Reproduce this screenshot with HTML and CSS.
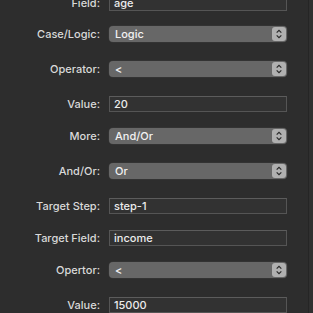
FILE: index.html
```html
<!DOCTYPE html>
<html>
<head>
  <title>Rule Editor</title>
  <meta charset="UTF-8">
  <meta name="viewport" content="width=device-width, initial-scale=1.0">
  <link rel="stylesheet" href="styles.css">
</head>
<body>
  <div class="window">
    <form class="form">
      <div class="row row-input row-first">
        <label>Field:</label>
        <div class="text-field">age</div>
      </div>
      <div class="row row-select">
        <label>Case/Logic:</label>
        <div class="popup"><span>Logic</span><i class="stepper"><svg viewBox="0 0 14 15"><path d="M4.5 6 L7 3.5 L9.5 6 M4.5 9 L7 11.5 L9.5 9"/></svg></i></div>
      </div>
      <div class="row row-select">
        <label>Operator:</label>
        <div class="popup"><span>&lt;</span><i class="stepper"><svg viewBox="0 0 14 15"><path d="M4.5 6 L7 3.5 L9.5 6 M4.5 9 L7 11.5 L9.5 9"/></svg></i></div>
      </div>
      <div class="row row-input">
        <label>Value:</label>
        <div class="text-field">20</div>
      </div>
      <div class="row row-select">
        <label>More:</label>
        <div class="popup"><span>And/Or</span><i class="stepper"><svg viewBox="0 0 14 15"><path d="M4.5 6 L7 3.5 L9.5 6 M4.5 9 L7 11.5 L9.5 9"/></svg></i></div>
      </div>
      <div class="row row-select">
        <label>And/Or:</label>
        <div class="popup"><span>Or</span><i class="stepper"><svg viewBox="0 0 14 15"><path d="M4.5 6 L7 3.5 L9.5 6 M4.5 9 L7 11.5 L9.5 9"/></svg></i></div>
      </div>
      <div class="row row-input">
        <label>Target Step:</label>
        <div class="text-field">step-1</div>
      </div>
      <div class="row row-input">
        <label>Target Field:</label>
        <div class="text-field">income</div>
      </div>
      <div class="row row-select">
        <label>Opertor:</label>
        <div class="popup"><span>&lt;</span><i class="stepper"><svg viewBox="0 0 14 15"><path d="M4.5 6 L7 3.5 L9.5 6 M4.5 9 L7 11.5 L9.5 9"/></svg></i></div>
      </div>
      <div class="row row-input">
        <label>Value:</label>
        <div class="text-field">15000</div>
      </div>
    </form>
    <div class="track"></div>
  </div>
</body>
</html>
```

FILE: styles.css
```css
html, body {
  margin: 0;
  height: 100%;
  background-color: #2d2d2d;
  overflow: hidden;
}
body {
  font-family: "Inter", "Liberation Sans", sans-serif;
  font-size: 11px;
  font-weight: 500;
  color: #dedede;
}
.window {
  display: flex;
  height: 100%;
}
.form {
  flex: 1;
  margin-top: -5px;
}
.row {
  display: grid;
  grid-template-columns: 100px 178px;
  column-gap: 9px;
  align-items: center;
  height: 16px;
}
.row-input {
  margin-bottom: 16px;
}
.row-first {
  margin-bottom: 15px;
}
.row-select {
  margin-bottom: 19px;
}
.row label {
  text-align: right;
  color: #d9d9d9;
}
.text-field {
  box-sizing: border-box;
  height: 16px;
  line-height: 14px;
  padding-left: 4px;
  background-color: #323232;
  border: 1px solid #555;
  border-top-color: #5c5c5c;
  color: #ececec;
}
.popup {
  box-sizing: border-box;
  height: 16px;
  display: flex;
  align-items: center;
  justify-content: space-between;
  padding: 0 1px 0 6px;
  background-color: #676767;
  border-radius: 4px;
  color: #f2f2f2;
  box-shadow: 0 0 0 0.5px #3a3a3a;
}
.stepper {
  display: block;
  width: 14px;
  height: 14px;
  background-color: #b0b0b0;
  border-radius: 3px;
}
.stepper svg {
  display: block;
  width: 14px;
  height: 14px;
  fill: none;
  stroke: #2a2a2a;
  stroke-width: 1.3;
}
.track {
  width: 4px;
  margin-left: 21px;
  border-left: 1px solid #252525;
  background-color: #303030;
}
```
